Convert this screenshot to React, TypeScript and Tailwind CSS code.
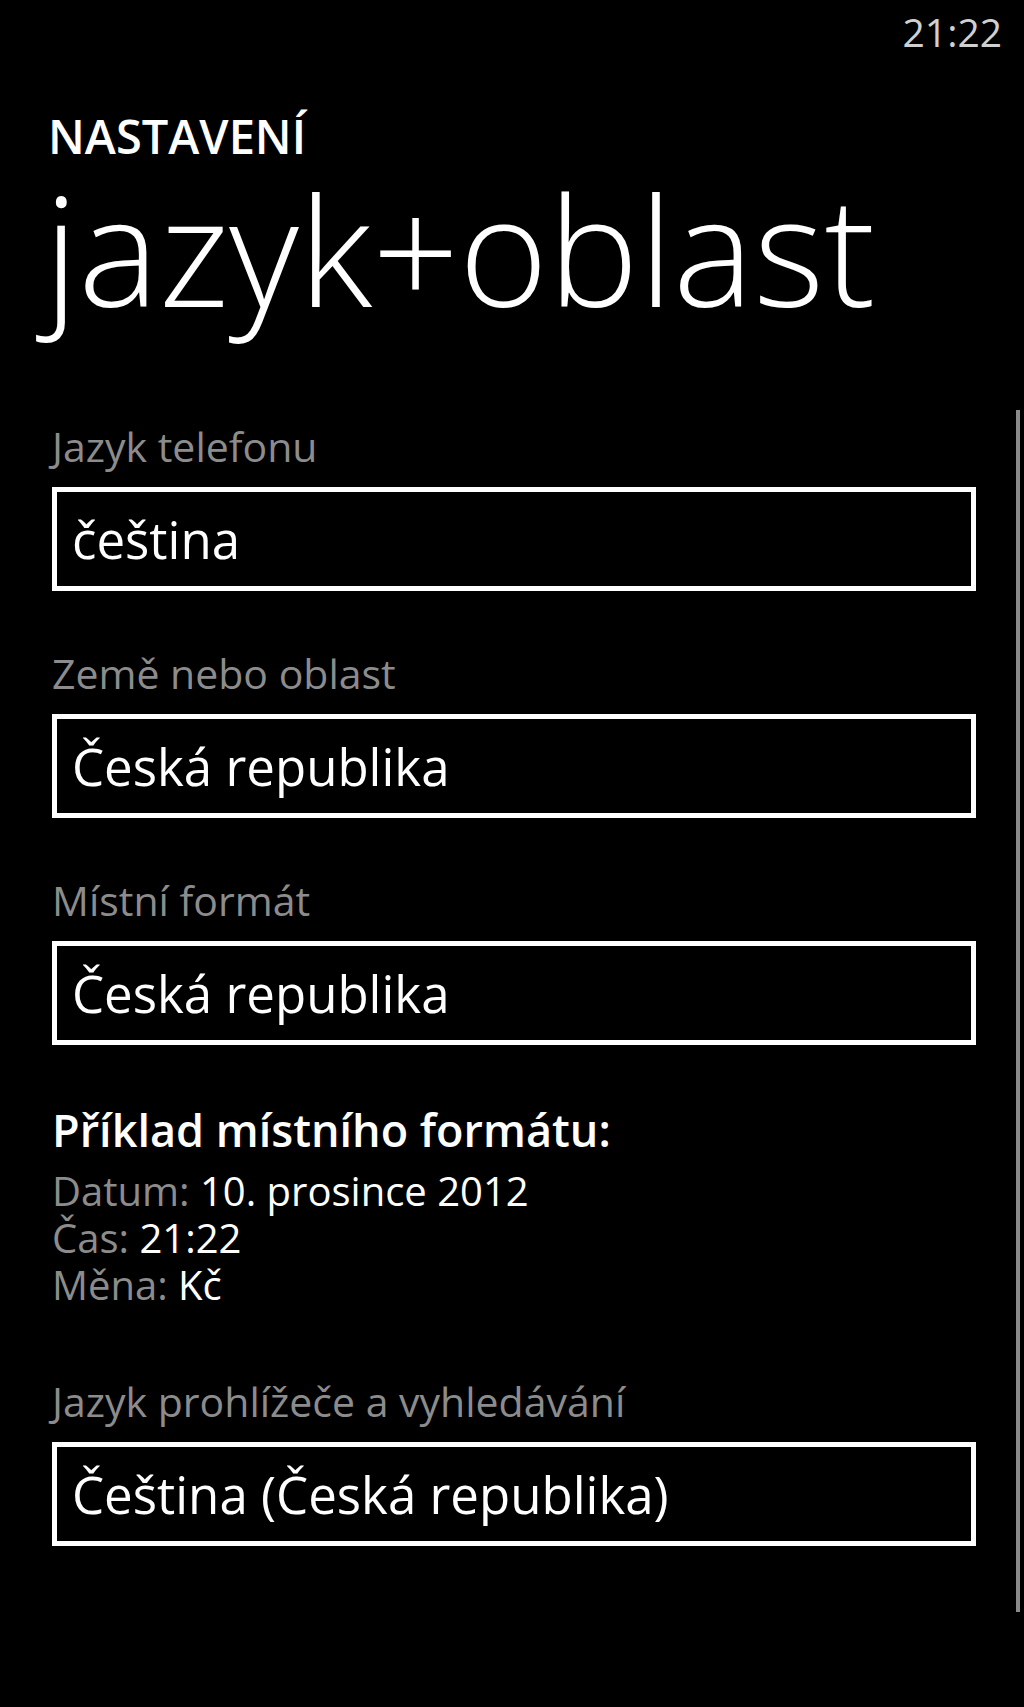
const fields = [
  { label: "Jazyk telefonu", value: "čeština" },
  { label: "Země nebo oblast", value: "Česká republika" },
  { label: "Místní formát", value: "Česká republika" },
]

function Picker({ label, value, className = "" }: { label: string; value: string; className?: string }) {
  return (
    <div className={className}>
      <div className="text-[41px] leading-none text-[#8c8c8c]">{label}</div>
      <div className="mt-[20px] flex h-[104px] items-center border-[5px] border-white px-[15px]">
        <span className="text-[51px] leading-none text-white">{value}</span>
      </div>
    </div>
  )
}

export default function App() {
  return (
    <div className="relative min-h-screen bg-black font-['Open_Sans',sans-serif] text-white">
      {/* status bar */}
      <div className="flex justify-end pt-[12px] pr-[22px]">
        <span className="text-[39px] leading-none text-[#d0d0d0]">21:22</span>
      </div>

      {/* header */}
      <div className="mt-[62px] pl-[48px]">
        <div className="text-[47px] font-semibold leading-none">NASTAVENÍ</div>
        <h1 className="-ml-[4px] mt-[13px] text-[152px] font-light leading-none">jazyk+oblast</h1>
      </div>

      {/* settings */}
      <div className="mt-[101px] pl-[52px] pr-[48px]">
        {fields.map((f, i) => (
          <Picker key={f.label} label={f.label} value={f.value} className={i > 0 ? "mt-[62px]" : ""} />
        ))}

        <div className="mt-[62px] text-[45px] font-semibold leading-none">Příklad místního formátu:</div>
        <div className="mt-[15px] text-[40px] leading-[47px]">
          <div>
            <span className="text-[#8c8c8c]">Datum: </span>10. prosince 2012
          </div>
          <div>
            <span className="text-[#8c8c8c]">Čas: </span>21:22
          </div>
          <div>
            <span className="text-[#8c8c8c]">Měna: </span>Kč
          </div>
        </div>

        <Picker label="Jazyk prohlížeče a vyhledávání" value="Čeština (Česká republika)" className="mt-[73px]" />
      </div>

      {/* scroll indicator */}
      <div className="absolute right-[4px] top-[410px] h-[1202px] w-[4px] bg-[#8a8a8a]" />
    </div>
  )
}
